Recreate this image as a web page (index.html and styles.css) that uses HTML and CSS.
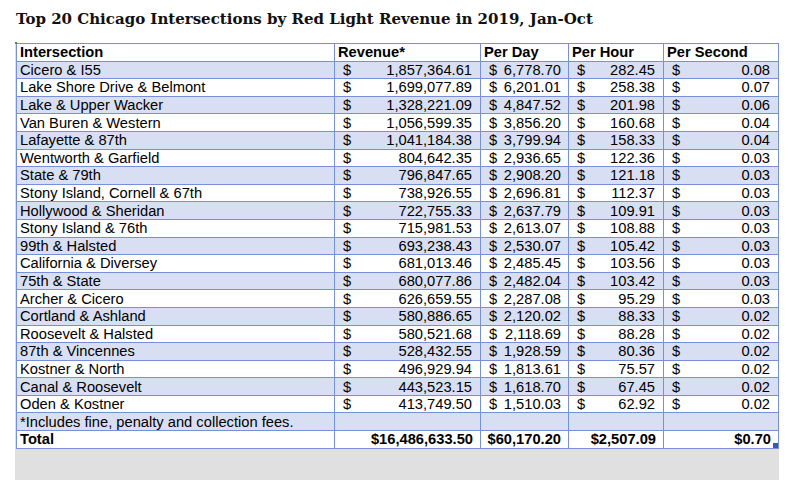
FILE: index.html
```html
<!DOCTYPE html>
<html lang="en">
<head>
    <meta charset="UTF-8">
    <title>Top 20 Chicago Intersections by Red Light Revenue</title>
    <link rel="stylesheet" href="styles.css">
</head>
<body>
    <h1 class="title">Top 20 Chicago Intersections by Red Light Revenue in 2019, Jan-Oct</h1>

    <div class="sheet">
        <table class="revenue-table">
            <colgroup>
                <col class="c-name">
                <col class="c-rev">
                <col class="c-day">
                <col class="c-hour">
                <col class="c-sec">
            </colgroup>
            <thead>
                <tr>
                    <th>Intersection</th>
                    <th>Revenue*</th>
                    <th>Per Day</th>
                    <th>Per Hour</th>
                    <th>Per Second</th>
                </tr>
            </thead>
            <tbody id="rows"></tbody>
            <tfoot>
                <tr class="note-row">
                    <td>*Includes fine, penalty and collection fees.</td>
                    <td></td><td></td><td></td><td></td>
                </tr>
                <tr class="total-row">
                    <td>Total</td>
                    <td class="num">$16,486,633.50</td>
                    <td class="num">$60,170.20</td>
                    <td class="num">$2,507.09</td>
                    <td class="num last">$0.70<span class="handle"></span></td>
                </tr>
            </tfoot>
        </table>
        <span class="corner-mark"></span>
    </div>

    <script>
        // intersection, revenue, per day, per hour, per second
        const data = [
            ['Cicero & I55', '1,857,364.61', '6,778.70', '282.45', '0.08'],
            ['Lake Shore Drive & Belmont', '1,699,077.89', '6,201.01', '258.38', '0.07'],
            ['Lake & Upper Wacker', '1,328,221.09', '4,847.52', '201.98', '0.06'],
            ['Van Buren & Western', '1,056,599.35', '3,856.20', '160.68', '0.04'],
            ['Lafayette & 87th', '1,041,184.38', '3,799.94', '158.33', '0.04'],
            ['Wentworth & Garfield', '804,642.35', '2,936.65', '122.36', '0.03'],
            ['State & 79th', '796,847.65', '2,908.20', '121.18', '0.03'],
            ['Stony Island, Cornell & 67th', '738,926.55', '2,696.81', '112.37', '0.03'],
            ['Hollywood & Sheridan', '722,755.33', '2,637.79', '109.91', '0.03'],
            ['Stony Island & 76th', '715,981.53', '2,613.07', '108.88', '0.03'],
            ['99th & Halsted', '693,238.43', '2,530.07', '105.42', '0.03'],
            ['California & Diversey', '681,013.46', '2,485.45', '103.56', '0.03'],
            ['75th & State', '680,077.86', '2,482.04', '103.42', '0.03'],
            ['Archer & Cicero', '626,659.55', '2,287.08', '95.29', '0.03'],
            ['Cortland & Ashland', '580,886.65', '2,120.02', '88.33', '0.02'],
            ['Roosevelt & Halsted', '580,521.68', '2,118.69', '88.28', '0.02'],
            ['87th & Vincennes', '528,432.55', '1,928.59', '80.36', '0.02'],
            ['Kostner & North', '496,929.94', '1,813.61', '75.57', '0.02'],
            ['Canal & Roosevelt', '443,523.15', '1,618.70', '67.45', '0.02'],
            ['Oden & Kostner', '413,749.50', '1,510.03', '62.92', '0.02']
        ];

        function money(value) {
            return '<div class="money"><span>$</span><span>' + value + '</span></div>';
        }

        const rows = document.getElementById('rows');
        data.forEach(row => {
            const tr = document.createElement('tr');
            tr.innerHTML = '<td>' + row[0] + '</td>' +
                '<td>' + money(row[1]) + '</td>' +
                '<td class="day">' + money(row[2]) + '</td>' +
                '<td>' + money(row[3]) + '</td>' +
                '<td>' + money(row[4]) + '</td>';
            rows.appendChild(tr);
        });
    </script>
</body>
</html>
```

FILE: styles.css
```css
body {
    margin: 0;
    padding: 0 0 0 16px;
    background-color: #fff;
    font-family: "Liberation Sans", Arial, sans-serif;
    color: #000;
}
.title {
    font-family: "DejaVu Serif", Georgia, serif;
    font-size: 15px;
    font-weight: bold;
    margin: 0;
    padding-top: 10px;
    height: 33px;
    color: #111;
}
.sheet {
    position: relative;
    width: 763px;
    margin-left: -1px;
    padding: 0 0 31px 1px;
    background-color: #e0e0e0;
}
.revenue-table {
    width: 762px;
    border-collapse: collapse;
    table-layout: fixed;
    background-color: #fff;
    font-size: 14.7px;
    line-height: 16px;
}
.c-name { width: 318px; }
.c-rev { width: 146px; }
.c-day { width: 88px; }
.c-hour { width: 95px; }
.c-sec { width: 115px; }

.revenue-table th,
.revenue-table td {
    border: 1px solid #7690da;
    height: 16.6px;
    padding: 0 3px;
    white-space: nowrap;
    overflow: hidden;
}
.revenue-table th {
    text-align: left;
    font-weight: bold;
}
.revenue-table tbody tr:nth-child(odd) td {
    background-color: #d9dff2;
}
.note-row td {
    background-color: #d9dff2;
}
.money {
    display: flex;
    justify-content: space-between;
    padding: 0 5px 0 5px;
}
.day .money {
    padding: 0 4px 0 5px;
}
.total-row td {
    font-weight: bold;
}
.total-row .num {
    text-align: right;
    padding-right: 7px;
}
.total-row .last {
    position: relative;
}
.handle {
    position: absolute;
    right: 0;
    bottom: 0;
    width: 5px;
    height: 5px;
    background-color: #3b55b8;
}
.corner-mark {
    position: absolute;
    left: 0;
    top: -1px;
    width: 2px;
    height: 2px;
    background-color: #3a9a4a;
}
```
